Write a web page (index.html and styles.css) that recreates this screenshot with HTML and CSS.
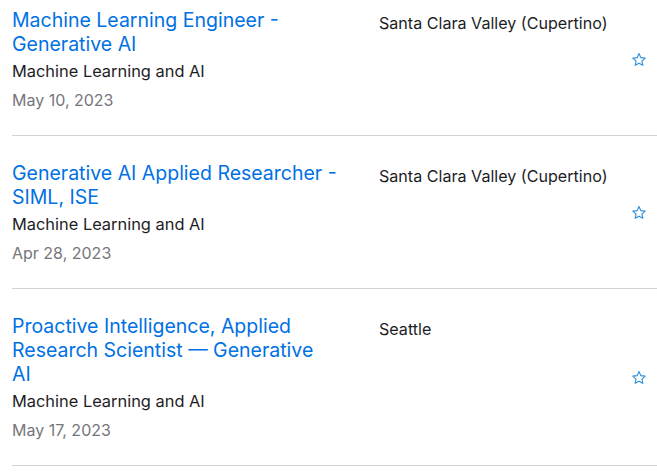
FILE: index.html
```html
<!DOCTYPE html>
<html lang="en">
<head>
<meta charset="utf-8">
<title>Jobs</title>
<link rel="stylesheet" href="styles.css">
</head>
<body>
<ul class="job-list">
  <li class="job">
    <div class="job-main">
      <a class="job-title" href="#">Machine Learning Engineer - Generative AI</a>
      <div class="job-team">Machine Learning and AI</div>
      <div class="job-date">May 10, 2023</div>
    </div>
    <div class="job-location">Santa Clara Valley (Cupertino)</div>
    <button class="job-fav" aria-label="Favorite">
      <svg viewBox="0 0 16 16" width="16" height="16"><path d="M8 1.6l1.85 4.05 4.35.45-3.25 2.95.9 4.3L8 11.15 4.15 13.35l.9-4.3L1.8 6.1l4.35-.45z" fill="none" stroke="currentColor" stroke-width="1.1" stroke-linejoin="round"/></svg>
    </button>
  </li>
  <li class="job">
    <div class="job-main">
      <a class="job-title" href="#">Generative AI Applied Researcher - SIML, ISE</a>
      <div class="job-team">Machine Learning and AI</div>
      <div class="job-date">Apr 28, 2023</div>
    </div>
    <div class="job-location">Santa Clara Valley (Cupertino)</div>
    <button class="job-fav" aria-label="Favorite">
      <svg viewBox="0 0 16 16" width="16" height="16"><path d="M8 1.6l1.85 4.05 4.35.45-3.25 2.95.9 4.3L8 11.15 4.15 13.35l.9-4.3L1.8 6.1l4.35-.45z" fill="none" stroke="currentColor" stroke-width="1.1" stroke-linejoin="round"/></svg>
    </button>
  </li>
  <li class="job">
    <div class="job-main">
      <a class="job-title" href="#">Proactive Intelligence, Applied Research Scientist — Generative AI</a>
      <div class="job-team">Machine Learning and AI</div>
      <div class="job-date">May 17, 2023</div>
    </div>
    <div class="job-location">Seattle</div>
    <button class="job-fav" aria-label="Favorite">
      <svg viewBox="0 0 16 16" width="16" height="16"><path d="M8 1.6l1.85 4.05 4.35.45-3.25 2.95.9 4.3L8 11.15 4.15 13.35l.9-4.3L1.8 6.1l4.35-.45z" fill="none" stroke="currentColor" stroke-width="1.1" stroke-linejoin="round"/></svg>
    </button>
  </li>
</ul>
</body>
</html>
```

FILE: styles.css
```css
html, body {
  margin: 0;
  padding: 0;
  background: #ffffff;
}

body {
  font-family: Inter, "Noto Sans", "Liberation Sans", sans-serif;
  color: #1d1d1f;
  overflow: hidden;
}

.job-list {
  list-style: none;
  margin: -17px 0 0 12px;
  padding: 0;
}

.job {
  display: grid;
  grid-template-columns: 367px 1fr 16px;
  align-items: start;
  padding: 25px 10px 23px 0;
  border-bottom: 1px solid #d2d2d7;
}

.job-main {
  display: flex;
  flex-direction: column;
  padding-right: 42px;
}

.job-title {
  font-size: 19.5px;
  line-height: 24px;
  color: #0071e3;
  text-decoration: none;
}

.job-team {
  margin-top: 3px;
  font-size: 16.4px;
  line-height: 24px;
  color: #1d1d1f;
}

.job-date {
  margin-top: 5px;
  font-size: 16px;
  line-height: 24px;
  color: #76767b;
}

.job-location {
  margin-top: 3px;
  font-size: 16.1px;
  line-height: 24px;
  color: #1d1d1f;
  white-space: nowrap;
}

.job-fav {
  align-self: center;
  width: 16px;
  height: 16px;
  padding: 0;
  border: 0;
  background: none;
  color: #2d8fdc;
  display: flex;
}
```
